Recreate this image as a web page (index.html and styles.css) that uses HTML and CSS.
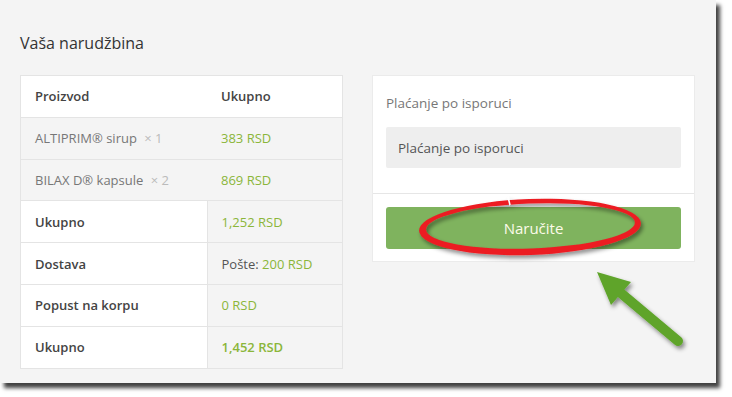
FILE: index.html
```html
<!DOCTYPE html>
<html lang="sr">
<head>
    <meta charset="UTF-8">
    <meta name="viewport" content="width=device-width, initial-scale=1.0">
    <title>Vaša narudžbina</title>
    <link rel="stylesheet" href="styles.css">
</head>
<body>
    <div class="frame">
        <h3 class="title">Vaša narudžbina</h3>

        <div class="checkout">
            <!-- Order review table -->
            <table class="order-table">
                <thead>
                    <tr>
                        <th class="col-name">Proizvod</th>
                        <th>Ukupno</th>
                    </tr>
                </thead>
                <tbody>
                    <tr class="item">
                        <td>ALTIPRIM® sirup <span class="qty">× 1</span></td>
                        <td class="amount">383 RSD</td>
                    </tr>
                    <tr class="item">
                        <td>BILAX D® kapsule <span class="qty">× 2</span></td>
                        <td class="amount">869 RSD</td>
                    </tr>
                </tbody>
                <tfoot>
                    <tr>
                        <th>Ukupno</th>
                        <td class="amount">1,252 RSD</td>
                    </tr>
                    <tr>
                        <th>Dostava</th>
                        <td>Pošte: <span class="amount">200 RSD</span></td>
                    </tr>
                    <tr>
                        <th>Popust na korpu</th>
                        <td class="amount">0 RSD</td>
                    </tr>
                    <tr>
                        <th>Ukupno</th>
                        <td class="amount strong">1,452 RSD</td>
                    </tr>
                </tfoot>
            </table>

            <!-- Payment box -->
            <div class="payment">
                <div class="payment-methods">
                    <label class="method-label">Plaćanje po isporuci</label>
                    <div class="method-box">Plaćanje po isporuci</div>
                </div>
                <div class="place-order">
                    <button type="button" class="order-button">Naručite</button>
                </div>
            </div>
        </div>

        <!-- Annotation drawn on top of the screenshot -->
        <svg class="annotation" width="716" height="383" viewBox="0 0 716 383">
            <defs>
                <filter id="shade" x="-20%" y="-40%" width="140%" height="180%">
                    <feDropShadow dx="2" dy="3" stdDeviation="2" flood-color="#000" flood-opacity="0.45"/>
                </filter>
            </defs>
            <g filter="url(#shade)">
                <path transform="rotate(-2 530 227)" fill="#ec1c24" fill-rule="evenodd"
                      d="M419 227a111 28 0 1 0 222 0a111 28 0 1 0 -222 0Z
                         M426 226a104.5 22.5 0 1 0 209 0a104.5 22.5 0 1 0 -209 0Z"/>
                <line x1="508" y1="197" x2="510" y2="205" stroke="#fff" stroke-width="1.5"/>
            </g>
            <g filter="url(#shade)">
                <line x1="678" y1="341" x2="616" y2="289" stroke="#5ea42a" stroke-width="10" stroke-linecap="round"/>
                <polygon points="597,272 631,282 611,305" fill="#5ea42a"/>
            </g>
        </svg>
    </div>
</body>
</html>
```

FILE: styles.css
```css
html, body {
    height: 100%;
}
body {
    margin: 0;
    background: #fff;
    font-family: "Open Sans", "DejaVu Sans", sans-serif;
}
.frame {
    position: relative;
    width: 716px;
    height: 383px;
    box-sizing: border-box;
    padding: 32px 21px 0 20px;
    background: #f4f4f4;
    box-shadow: 4px 5px 4px rgba(0, 0, 0, 0.75);
}
.title {
    margin: 0 0 21px;
    font-size: 16px;
    line-height: 22px;
    font-weight: normal;
    color: #333;
}
.checkout {
    display: grid;
    grid-template-columns: 323px 323px;
    gap: 29px;
    align-items: start;
}

/* order table */
.order-table {
    width: 323px;
    border-collapse: collapse;
    border: 1px solid #e4e4e4;
    font-size: 13px;
}
.order-table th,
.order-table td {
    height: 40.8px;
    padding: 0 14px;
    text-align: left;
    border-bottom: 1px solid #e4e4e4;
}
.order-table .col-name {
    width: 158px;
}
.order-table thead th {
    background: #fff;
    color: #444;
    font-weight: 600;
}
.order-table .item td {
    background: #f4f4f4;
    color: #777;
}
.order-table .qty {
    margin-left: 4px;
    color: #bbb;
}
.order-table tfoot th {
    background: #fff;
    color: #444;
    font-weight: 600;
}
.order-table tfoot td {
    background: #f4f4f4;
    color: #555;
    border-left: 1px solid #e4e4e4;
}
.amount {
    color: #8bb63a;
}
.order-table td.amount {
    color: #8bb63a;
}
.strong {
    font-weight: 600;
}

/* payment box */
.payment {
    background: #fff;
    border: 1px solid #ebebeb;
}
.payment-methods {
    padding: 17px 13px 25px;
    border-bottom: 1px solid #e6e6e6;
}
.method-label {
    display: block;
    margin-bottom: 14px;
    font-size: 13.5px;
    line-height: 20px;
    color: #777;
}
.method-box {
    height: 41px;
    padding: 0 12px;
    display: flex;
    align-items: center;
    background: #eee;
    border-radius: 2px;
    font-size: 13.5px;
    color: #555;
}
.place-order {
    padding: 13px 13px 12px;
}
.order-button {
    width: 100%;
    height: 42px;
    border: none;
    border-radius: 3px;
    background: #7fb35e;
    color: #fdfbea;
    font-family: inherit;
    font-size: 15px;
    cursor: pointer;
}

.annotation {
    position: absolute;
    left: 0;
    top: 0;
    pointer-events: none;
}
```
